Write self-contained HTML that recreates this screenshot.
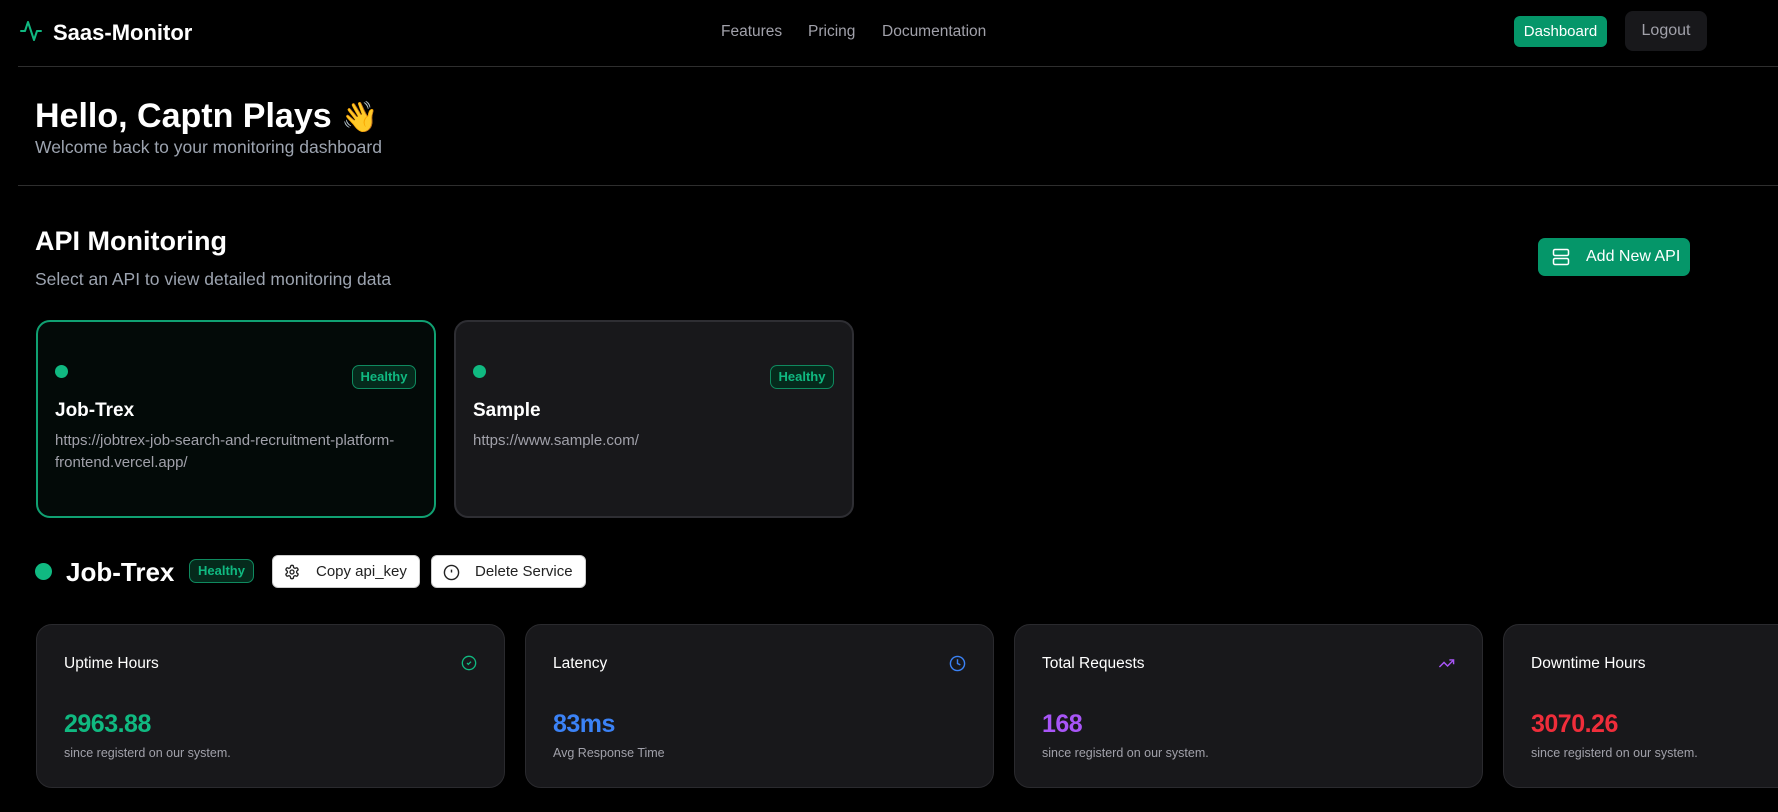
<!DOCTYPE html>
<html><head><meta charset="utf-8"><style>
*{box-sizing:border-box;margin:0;padding:0}
body{width:1778px;height:812px;background:#000;color:#fff;font-family:"Liberation Sans",Arial,sans-serif;position:relative;overflow:hidden}
.a{position:absolute;white-space:nowrap}
.line{position:absolute;left:18px;right:0;height:1px;background:#2e2e2e}
.badge{position:absolute;border:1px solid #0f8a5f;background:#052a1c;color:#10b981;border-radius:7px;font-size:13px;font-weight:bold;text-align:center}
.card{position:absolute;border-radius:14px}
.stat{position:absolute;top:624px;width:469px;height:164px;background:#18181b;border:1px solid #2a2a2e;border-radius:16px}
.stat .t{position:absolute;left:27px;top:30px;font-size:15.5px;color:#fff}
.stat .v{position:absolute;left:27px;top:85px;font-size:25px;font-weight:bold;letter-spacing:-0.5px}
.stat .s{position:absolute;left:27px;top:121px;font-size:12.5px;color:#a1a1aa}
.stat svg{position:absolute;right:27px;top:30px}
.btn{position:absolute;background:#fff;color:#222;border-radius:6px;font-size:15px;border:1px solid #ccc}
</style></head><body>
<svg class="a" style="left:18px;top:19px" width="26" height="24" viewBox="0 0 24 24" fill="none" stroke="#10b981" stroke-width="2" stroke-linecap="round" stroke-linejoin="round"><path d="M22 12h-4l-3 9L9 3l-3 9H2"/></svg>
<div class="a" style="left:53px;top:20px;font-size:22px;font-weight:bold">Saas-Monitor</div>
<div class="a" style="left:721px;top:23px;font-size:15.5px;color:#a1a1aa">Features</div>
<div class="a" style="left:808px;top:23px;font-size:15.5px;color:#a1a1aa">Pricing</div>
<div class="a" style="left:882px;top:23px;font-size:15.5px;color:#a1a1aa">Documentation</div>
<div class="a" style="left:1514px;top:16px;width:93px;height:31px;background:#059669;border-radius:6px;font-size:15px;line-height:31px;text-align:center">Dashboard</div>
<div class="a" style="left:1625px;top:11px;width:82px;height:40px;background:#18181b;border-radius:8px;font-size:16px;line-height:40px;text-align:center;color:#a1a1aa">Logout</div>
<div class="line" style="top:66px"></div>
<div class="a" style="left:35px;top:97px;font-size:34px;font-weight:bold">Hello, Captn Plays <span style="font-size:30px">👋</span></div>
<div class="a" style="left:35px;top:137px;font-size:17.5px;color:#9ca3af">Welcome back to your monitoring dashboard</div>
<div class="line" style="top:185px"></div>
<div class="a" style="left:35px;top:226px;font-size:27px;font-weight:bold">API Monitoring</div>
<div class="a" style="left:35px;top:269px;font-size:17.5px;color:#9ca3af">Select an API to view detailed monitoring data</div>
<div class="a" style="left:1538px;top:238px;width:152px;height:38px;background:#059669;border-radius:7px;font-size:16px;line-height:38px">
<svg style="position:absolute;left:14px;top:10px" width="18" height="18" viewBox="0 0 24 24" fill="none" stroke="#fff" stroke-width="2"><rect x="2" y="2" width="20" height="8" rx="2"/><rect x="2" y="14" width="20" height="8" rx="2"/><path d="M6 6h.01M6 18h.01"/></svg>
<span style="position:absolute;left:48px">Add New API</span></div>
<div class="card" style="left:36px;top:320px;width:400px;height:198px;background:#030a08;border:2px solid #10a172"></div>
<div class="a" style="left:55px;top:365px;width:13px;height:13px;border-radius:50%;background:#10b981"></div>
<div class="badge" style="left:352px;top:365px;width:64px;height:24px;line-height:22px">Healthy</div>
<div class="a" style="left:55px;top:400px;font-size:19px;font-weight:bold">Job-Trex</div>
<div class="a" style="left:55px;top:430px;font-size:15px;color:#a1a1aa;line-height:22px">https://jobtrex-job-search-and-recruitment-platform-<br>frontend.vercel.app/</div>
<div class="card" style="left:454px;top:320px;width:400px;height:198px;background:#18181b;border:2px solid #2e2e33"></div>
<div class="a" style="left:473px;top:365px;width:13px;height:13px;border-radius:50%;background:#10b981"></div>
<div class="badge" style="left:770px;top:365px;width:64px;height:24px;line-height:22px">Healthy</div>
<div class="a" style="left:473px;top:400px;font-size:19px;font-weight:bold">Sample</div>
<div class="a" style="left:473px;top:430px;font-size:15px;color:#a1a1aa;line-height:22px">https://www.sample.com/</div>
<div class="a" style="left:35px;top:563px;width:17px;height:17px;border-radius:50%;background:#10b981"></div>
<div class="a" style="left:66px;top:557px;font-size:26px;font-weight:bold">Job-Trex</div>
<div class="badge" style="left:189px;top:559px;width:65px;height:24px;line-height:22px">Healthy</div>
<div class="btn" style="left:272px;top:555px;width:148px;height:33px">
<svg style="position:absolute;left:11px;top:8px" width="16" height="16" viewBox="0 0 24 24" fill="none" stroke="#222" stroke-width="2"><path d="M12.22 2h-.44a2 2 0 0 0-2 2v.18a2 2 0 0 1-1 1.73l-.43.25a2 2 0 0 1-2 0l-.15-.08a2 2 0 0 0-2.73.73l-.22.38a2 2 0 0 0 .73 2.730l.15.1a2 2 0 0 1 1 1.72v.51a2 2 0 0 1-1 1.74l-.15.09a2 2 0 0 0-.73 2.73l.22.38a2 2 0 0 0 2.73.73l.15-.08a2 2 0 0 1 2 0l.43.25a2 2 0 0 1 1 1.73V20a2 2 0 0 0 2 2h.44a2 2 0 0 0 2-2v-.18a2 2 0 0 1 1-1.73l.43-.25a2 2 0 0 1 2 0l.15.08a2 2 0 0 0 2.73-.73l.22-.39a2 2 0 0 0-.73-2.73l-.15-.08a2 2 0 0 1-1-1.74v-.5a2 2 0 0 1 1-1.74l.15-.09a2 2 0 0 0 .73-2.73l-.22-.38a2 2 0 0 0-2.73-.73l-.15.08a2 2 0 0 1-2 0l-.43-.25a2 2 0 0 1-1-1.73V4a2 2 0 0 0-2-2z"/><circle cx="12" cy="12" r="3"/></svg>
<span style="position:absolute;left:43px;top:7px">Copy api_key</span></div>
<div class="btn" style="left:431px;top:555px;width:155px;height:33px">
<svg style="position:absolute;left:11px;top:8px" width="17" height="17" viewBox="0 0 24 24" fill="none" stroke="#222" stroke-width="2"><circle cx="12" cy="12" r="10"/><path d="M12 8v4M12 16h.01"/></svg>
<span style="position:absolute;left:43px;top:7px">Delete Service</span></div>
<div class="stat" style="left:36px"><div class="t">Uptime Hours</div>
<svg width="16" height="16" viewBox="0 0 24 24" fill="none" stroke="#10b981" stroke-width="2"><circle cx="12" cy="12" r="10"/><path d="M9 12l2 2 4-4"/></svg>
<div class="v" style="color:#10b981">2963.88</div><div class="s">since registerd on our system.</div></div>
<div class="stat" style="left:525px"><div class="t">Latency</div>
<svg width="17" height="17" viewBox="0 0 24 24" fill="none" stroke="#3b82f6" stroke-width="2"><circle cx="12" cy="12" r="10"/><path d="M12 6v6l4 2"/></svg>
<div class="v" style="color:#3b82f6">83ms</div><div class="s">Avg Response Time</div></div>
<div class="stat" style="left:1014px"><div class="t">Total Requests</div>
<svg width="17" height="17" viewBox="0 0 24 24" fill="none" stroke="#a855f7" stroke-width="2"><path d="M22 7l-8.5 8.5-5-5L2 17"/><path d="M16 7h6v6"/></svg>
<div class="v" style="color:#a855f7">168</div><div class="s">since registerd on our system.</div></div>
<div class="stat" style="left:1503px"><div class="t">Downtime Hours</div>
<div class="v" style="color:#ef2d3a">3070.26</div><div class="s">since registerd on our system.</div></div>
</body></html>
